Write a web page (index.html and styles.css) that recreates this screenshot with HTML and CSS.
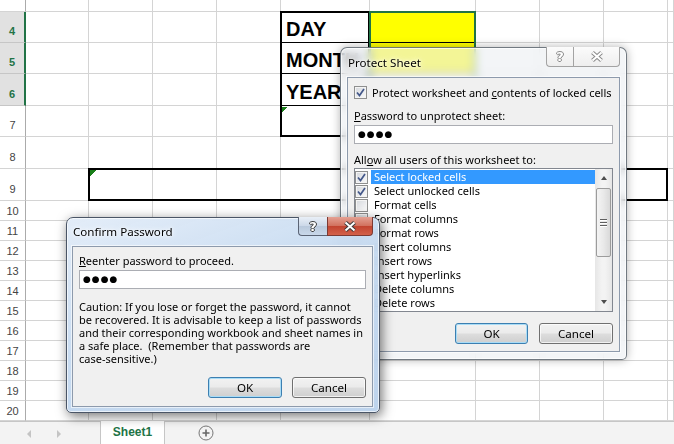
FILE: index.html
```html
<!DOCTYPE html>
<html lang="en">
<head>
  <meta charset="UTF-8" />
  <title>Protect Sheet</title>
  <link rel="stylesheet" href="styles.css">
</head>
<body>

  <!-- Worksheet -->
  <div class="sheet">
    <div class="grid" id="grid">
      <div class="entry r4">DAY</div>
      <div class="entry r5">MONTH</div>
      <div class="entry r6">YEAR</div>
      <div class="fill r4"></div>
      <div class="fill r5"></div>
      <div class="date-box"></div>
      <div class="pick-box"></div>
      <div class="long-box"></div>
      <div class="flag e7"></div>
      <div class="flag b9"></div>
    </div>
  </div>

  <div class="tabbar">
    <div class="nav">
      <span class="arrow left"></span>
      <span class="arrow right"></span>
    </div>
    <div class="tab">Sheet1</div>
    <div class="add">
      <svg width="16" height="16" viewBox="0 0 16 16">
        <circle cx="8" cy="8" r="7" fill="none" stroke="#777" stroke-width="1" />
        <path d="M8 4.5 V11.5 M4.5 8 H11.5" stroke="#666" stroke-width="1.6" />
      </svg>
    </div>
  </div>

  <!-- Protect Sheet dialog (inactive) -->
  <div class="dialog protect">
    <div class="titlebar">
      <span class="title">Protect Sheet</span>
      <div class="caption">
        <span class="cap help">?</span>
        <span class="cap close">
          <svg width="14" height="11" viewBox="0 0 14 11">
            <path d="M2.5 1.5 L11.5 9.5 M11.5 1.5 L2.5 9.5" stroke="#8a8a8a" stroke-width="4" />
            <path d="M2.5 1.5 L11.5 9.5 M11.5 1.5 L2.5 9.5" stroke="#fff" stroke-width="2" />
          </svg>
        </span>
      </div>
    </div>
    <div class="client">
      <div class="check-row">
        <span class="box"><svg width="11" height="11" viewBox="0 0 11 11"><path d="M2 5.5 L4.5 8.5 L9 2" fill="none" stroke="#44588a" stroke-width="1.7" /></svg></span>
        <span>Protect worksheet and <u>c</u>ontents of locked cells</span>
      </div>
      <div class="label"><u>P</u>assword to unprotect sheet:</div>
      <div class="field">●●●●</div>
      <div class="label">All<u>o</u>w all users of this worksheet to:</div>
      <div class="listbox">
        <ul class="items">
          <li class="on"><span class="box"><svg width="11" height="11" viewBox="0 0 11 11"><path d="M2 5.5 L4.5 8.5 L9 2" fill="none" stroke="#44588a" stroke-width="1.7" /></svg></span><span class="text">Select locked cells</span></li>
          <li><span class="box"><svg width="11" height="11" viewBox="0 0 11 11"><path d="M2 5.5 L4.5 8.5 L9 2" fill="none" stroke="#44588a" stroke-width="1.7" /></svg></span><span class="text">Select unlocked cells</span></li>
          <li><span class="box"></span><span class="text">Format cells</span></li>
          <li><span class="box"></span><span class="text">Format columns</span></li>
          <li><span class="box"></span><span class="text">Format rows</span></li>
          <li><span class="box"></span><span class="text">Insert columns</span></li>
          <li><span class="box"></span><span class="text">Insert rows</span></li>
          <li><span class="box"></span><span class="text">Insert hyperlinks</span></li>
          <li><span class="box"></span><span class="text">Delete columns</span></li>
          <li><span class="box"></span><span class="text">Delete rows</span></li>
        </ul>
        <div class="scrollbar">
          <span class="step up"></span>
          <span class="thumb"><i></i><i></i><i></i></span>
          <span class="step down"></span>
        </div>
      </div>
      <div class="actions">
        <button class="btn default">OK</button>
        <button class="btn">Cancel</button>
      </div>
    </div>
  </div>

  <!-- Confirm Password dialog (active) -->
  <div class="dialog confirm">
    <div class="titlebar">
      <span class="title">Confirm Password</span>
      <div class="caption">
        <span class="cap help">?</span>
        <span class="cap close">
          <svg width="14" height="11" viewBox="0 0 14 11">
            <path d="M2.5 1.5 L11.5 9.5 M11.5 1.5 L2.5 9.5" stroke="#3b3b3b" stroke-width="4" />
            <path d="M2.5 1.5 L11.5 9.5 M11.5 1.5 L2.5 9.5" stroke="#fff" stroke-width="2" />
          </svg>
        </span>
      </div>
    </div>
    <div class="client">
      <div class="label"><u>R</u>eenter password to proceed.</div>
      <div class="field">●●●●</div>
      <p class="caution">
        Caution: If you lose or forget the password, it cannot<br>
        be recovered. It is advisable to keep a list of passwords<br>
        and their corresponding workbook and sheet names in<br>
        a safe place.&nbsp; (Remember that passwords are<br>
        case-sensitive.)
      </p>
      <div class="actions">
        <button class="btn default">OK</button>
        <button class="btn">Cancel</button>
      </div>
    </div>
  </div>

  <script>
    // build the plain cells and row numbers of rows 3..20
    const grid = document.getElementById("grid");
    const picked = [4, 5, 6];
    const cells = document.createDocumentFragment();

    for (let r = 3; r <= 20; r++) {
      const line = r - 2;
      const head = document.createElement("div");
      head.className = "row-head";
      if (r === 3) head.classList.add("cut");
      if (r >= 4 && r <= 9) head.classList.add("tall");
      if (picked.includes(r)) head.classList.add("picked");
      head.textContent = r;
      head.style.gridRow = line;
      cells.appendChild(head);

      for (let c = 2; c <= 11; c++) {
        const cell = document.createElement("div");
        cell.className = "cell";
        cell.style.gridRow = line;
        cell.style.gridColumn = c;
        cells.appendChild(cell);
      }
    }
    grid.prepend(cells);
  </script>

</body>
</html>
```

FILE: styles.css
```css
* {
  box-sizing: border-box;
  margin: 0;
  padding: 0;
}

body {
  position: relative;
  width: 674px;
  height: 444px;
  overflow: hidden;
  background: #fff;
  font-family: "Liberation Sans", Arial, sans-serif;
}

/* Worksheet grid */
.sheet {
  height: 421px;
  overflow: hidden;
}

.grid {
  display: grid;
  grid-template-columns: 26px 63px 64px 64px 64px 89px 106px 64px 64px 64px 1fr;
  grid-template-rows: 20px 31px 31px 32px 31px 32px 32px repeat(11, 20px);
  margin-top: -8px;
}

.cell {
  border-right: 1px solid #d4d4d4;
  border-bottom: 1px solid #d4d4d4;
}

.row-head {
  grid-column: 1;
  display: flex;
  align-items: flex-end;
  justify-content: center;
  padding-bottom: 2px;
  border-right: 1px solid #ababab;
  border-bottom: 1px solid #d4d4d4;
  font-size: 11px;
  line-height: 13px;
  color: #444;
}

.row-head.tall { padding-bottom: 4px; }
.row-head.cut { padding-bottom: 9px; }

.row-head.picked {
  background: #e1e1e1;
  color: #217346;
  font-weight: bold;
  border-right: 2px solid #217346;
  border-bottom-color: #c6c6c6;
}

.r4 { grid-row: 2; }
.r5 { grid-row: 3; }
.r6 { grid-row: 4; }

.entry {
  grid-column: 6;
  z-index: 1;
  display: flex;
  align-items: flex-end;
  padding: 0 0 2px 5px;
  background: #fff;
  border-bottom: 1px solid #000;
  font-size: 20px;
  font-weight: bold;
  line-height: 22px;
  white-space: nowrap;
}

.fill {
  grid-column: 7;
  z-index: 1;
  background: #ffff00;
  border-bottom: 1px solid #000;
}

.date-box {
  grid-row: 2 / 6;
  grid-column: 6;
  z-index: 2;
  margin: -1px 0 0 -1px;
  border: 2px solid #000;
}

.pick-box {
  grid-row: 2 / 5;
  grid-column: 7;
  z-index: 2;
  margin: -1px 0 0 -1px;
  border: 2px solid #217346;
}

.long-box {
  grid-row: 7;
  grid-column: 3 / 11;
  z-index: 2;
  margin: -1px 0 0 -1px;
  border: 2px solid #000;
}

.flag {
  z-index: 3;
  width: 6px;
  height: 6px;
  margin: 1px 0 0 1px;
  background: linear-gradient(135deg, #1a7f1a 50%, transparent 50%);
}

.flag.e7 { grid-row: 5; grid-column: 6; }
.flag.b9 { grid-row: 7; grid-column: 3; }

/* Sheet tabs */
.tabbar {
  display: flex;
  align-items: stretch;
  height: 23px;
  background: #f3f3f3;
  border-top: 1px solid #c6c6c6;
}

.nav {
  position: relative;
  width: 100px;
}

.arrow {
  position: absolute;
  top: 8px;
  width: 0;
  height: 0;
  border-top: 4px solid transparent;
  border-bottom: 4px solid transparent;
}

.arrow.left { left: 27px; border-right: 4px solid #c4c4c4; }
.arrow.right { left: 57px; border-left: 4px solid #c4c4c4; }

.tab {
  width: 65px;
  margin-top: -1px;
  background: #fff;
  border-left: 1px solid #c6c6c6;
  border-right: 1px solid #c6c6c6;
  color: #217346;
  font-size: 12px;
  font-weight: bold;
  line-height: 23px;
  text-align: center;
}

.add {
  display: flex;
  align-items: center;
  margin-left: 33px;
}

/* Dialogs */
.dialog {
  position: absolute;
  display: flex;
  flex-direction: column;
  font-family: "Noto Sans", "Segoe UI", sans-serif;
  font-size: 11px;
  color: #000;
  border-radius: 7px 7px 5px 5px;
}

.titlebar {
  display: flex;
  align-items: flex-start;
}

.title {
  font-size: 11.6px;
  line-height: 15px;
  text-shadow: 0 0 6px #fff, 0 0 3px #fff;
}

.caption {
  display: flex;
  margin: -1px 6px 0 auto;
}

.cap {
  display: flex;
  align-items: center;
  justify-content: center;
  border: 1px solid #8b95a3;
  border-top: none;
}

.cap.help {
  border-right: none;
  border-bottom-left-radius: 4px;
  font-family: "DejaVu Sans", sans-serif;
  font-weight: bold;
  font-size: 13px;
  color: #fff;
}

.cap.close {
  border-bottom-right-radius: 4px;
}

.client {
  display: flex;
  flex-direction: column;
  background: #f0f0f0;
  border: 1px solid #8d9aac;
  box-shadow: 0 0 0 1px rgba(255, 255, 255, 0.6);
}

.label {
  line-height: 15px;
  white-space: nowrap;
}

.field {
  height: 19px;
  padding-left: 3px;
  background: #fff;
  border: 1px solid #abadb3;
  font-family: "DejaVu Sans", sans-serif;
  font-size: 9px;
  line-height: 17px;
  letter-spacing: 1px;
}

.box {
  display: flex;
  align-items: center;
  justify-content: center;
  flex: none;
  width: 13px;
  height: 13px;
  border: 1px solid #8e8f8f;
  background: linear-gradient(135deg, #d4d7dc, #fbfbfb);
  box-shadow: inset 0 0 0 1px #f4f4f4;
}

.actions {
  display: flex;
  justify-content: flex-end;
}

.btn {
  height: 21px;
  font: inherit;
  font-size: 11.6px;
  color: #000;
  border: 1px solid #707070;
  border-radius: 3px;
  background: linear-gradient(#f2f2f2 0%, #ebebeb 48%, #dddddd 52%, #cfcfcf 100%);
  box-shadow: inset 0 0 0 1px rgba(255, 255, 255, 0.7);
}

.btn.default {
  border-color: #3c7fb1;
  box-shadow: inset 0 0 0 1px #a9dcf6;
}

/* Protect Sheet */
.protect {
  left: 340px;
  top: 47px;
  width: 287px;
  height: 313px;
  z-index: 10;
  border: 1px solid rgba(70, 80, 90, 0.75);
  background: rgba(236, 239, 242, 0.62);
  backdrop-filter: blur(4px);
  box-shadow: 0 0 10px rgba(0, 0, 0, 0.3), inset 0 0 0 1px rgba(255, 255, 255, 0.7);
}

.protect .titlebar { height: 29px; }
.protect .title { padding: 7px 0 0 7px; }

.protect .cap {
  height: 20px;
  background: linear-gradient(#fbfbfb, #eeeeee);
  border-color: #a3a3a3;
  text-shadow: -1px 0 #8a8a8a, 1px 0 #8a8a8a, 0 -1px #8a8a8a, 0 1px #8a8a8a;
}

.protect .help { width: 27px; }
.protect .close { width: 47px; }

.protect .client {
  height: 275px;
  margin: 0 6px;
  padding: 8px 6px 0;
}

.check-row {
  display: flex;
  align-items: center;
  gap: 5px;
  height: 13px;
  line-height: 15px;
  white-space: nowrap;
}

.protect .label:nth-child(2) { margin-top: 9px; }
.protect .field { margin-top: 2px; }
.protect .label:nth-child(4) { margin-top: 8px; }

.listbox {
  display: flex;
  height: 144px;
  margin-top: 1px;
  background: #fff;
  border: 1px solid #828790;
}

.items {
  flex: 1;
  list-style: none;
  padding-top: 1px;
  overflow: hidden;
}

.items li {
  display: flex;
  align-items: center;
  height: 14px;
}

.items .box {
  margin-right: 3px;
}

.items .text {
  flex: 1;
  padding-left: 3px;
  line-height: 14px;
  white-space: nowrap;
}

.items li.on .text {
  background: #3399ff;
  color: #fff;
}

.scrollbar {
  display: flex;
  flex-direction: column;
  align-items: center;
  width: 17px;
  background: linear-gradient(90deg, #e6e6e6, #f3f3f3 40%, #f3f3f3 60%, #e6e6e6);
}

.step {
  width: 0;
  height: 0;
  border-left: 3.5px solid transparent;
  border-right: 3.5px solid transparent;
}

.step.up {
  margin-top: 7px;
  border-bottom: 4px solid #4d4d4d;
}

.step.down {
  margin: auto 0 7px;
  border-top: 4px solid #4d4d4d;
}

.thumb {
  display: flex;
  flex-direction: column;
  align-items: center;
  justify-content: center;
  gap: 2px;
  width: 15px;
  height: 69px;
  margin-top: 8px;
  border: 1px solid #9c9c9c;
  border-radius: 2px;
  background: linear-gradient(90deg, #f4f4f4, #e9e9e9 50%, #d9d9d9);
}

.thumb i {
  width: 7px;
  height: 1px;
  background: #5f5f5f;
  box-shadow: 0 1px 0 #fff;
}

.protect .actions {
  margin-top: 11px;
  gap: 11px;
}

.protect .btn.default { width: 73px; }
.protect .btn { width: 74px; }

/* Confirm Password */
.confirm {
  left: 66px;
  top: 217px;
  width: 314px;
  height: 196px;
  z-index: 11;
  border: 1px solid #4a5566;
  background: linear-gradient(160deg, rgba(226, 236, 248, 0.95) 0%, rgba(196, 217, 240, 0.92) 45%, rgba(184, 208, 235, 0.92) 100%);
  backdrop-filter: blur(4px);
  box-shadow: 2px 3px 12px rgba(0, 0, 0, 0.55), inset 0 0 0 1px rgba(255, 255, 255, 0.65);
}

.confirm .titlebar { height: 28px; }
.confirm .title { padding: 6px 0 0 6px; }

.confirm .cap {
  height: 19px;
  border-color: #5b6475;
  text-shadow: -1px 0 #3e3e3e, 1px 0 #3e3e3e, 0 -1px #3e3e3e, 0 1px #3e3e3e;
}

.confirm .help {
  width: 29px;
  background: linear-gradient(#e9eff7, #cbd8e8 50%, #b9c9dc 51%, #c9d8ea);
}

.confirm .close {
  width: 46px;
  background: linear-gradient(#e4a193 0%, #d2725f 48%, #c24430 52%, #d3614a 100%);
  border-color: #7d3a33;
}

.confirm .client {
  height: 161px;
  margin: 0 6px 0 5px;
  padding: 6px 6px 0;
}

.confirm .field { margin-top: 2px; }

.caution {
  margin-top: 11px;
  line-height: 13px;
  white-space: nowrap;
}

.confirm .actions {
  margin-top: 12px;
  gap: 10px;
}

.confirm .btn { width: 74px; }
```
